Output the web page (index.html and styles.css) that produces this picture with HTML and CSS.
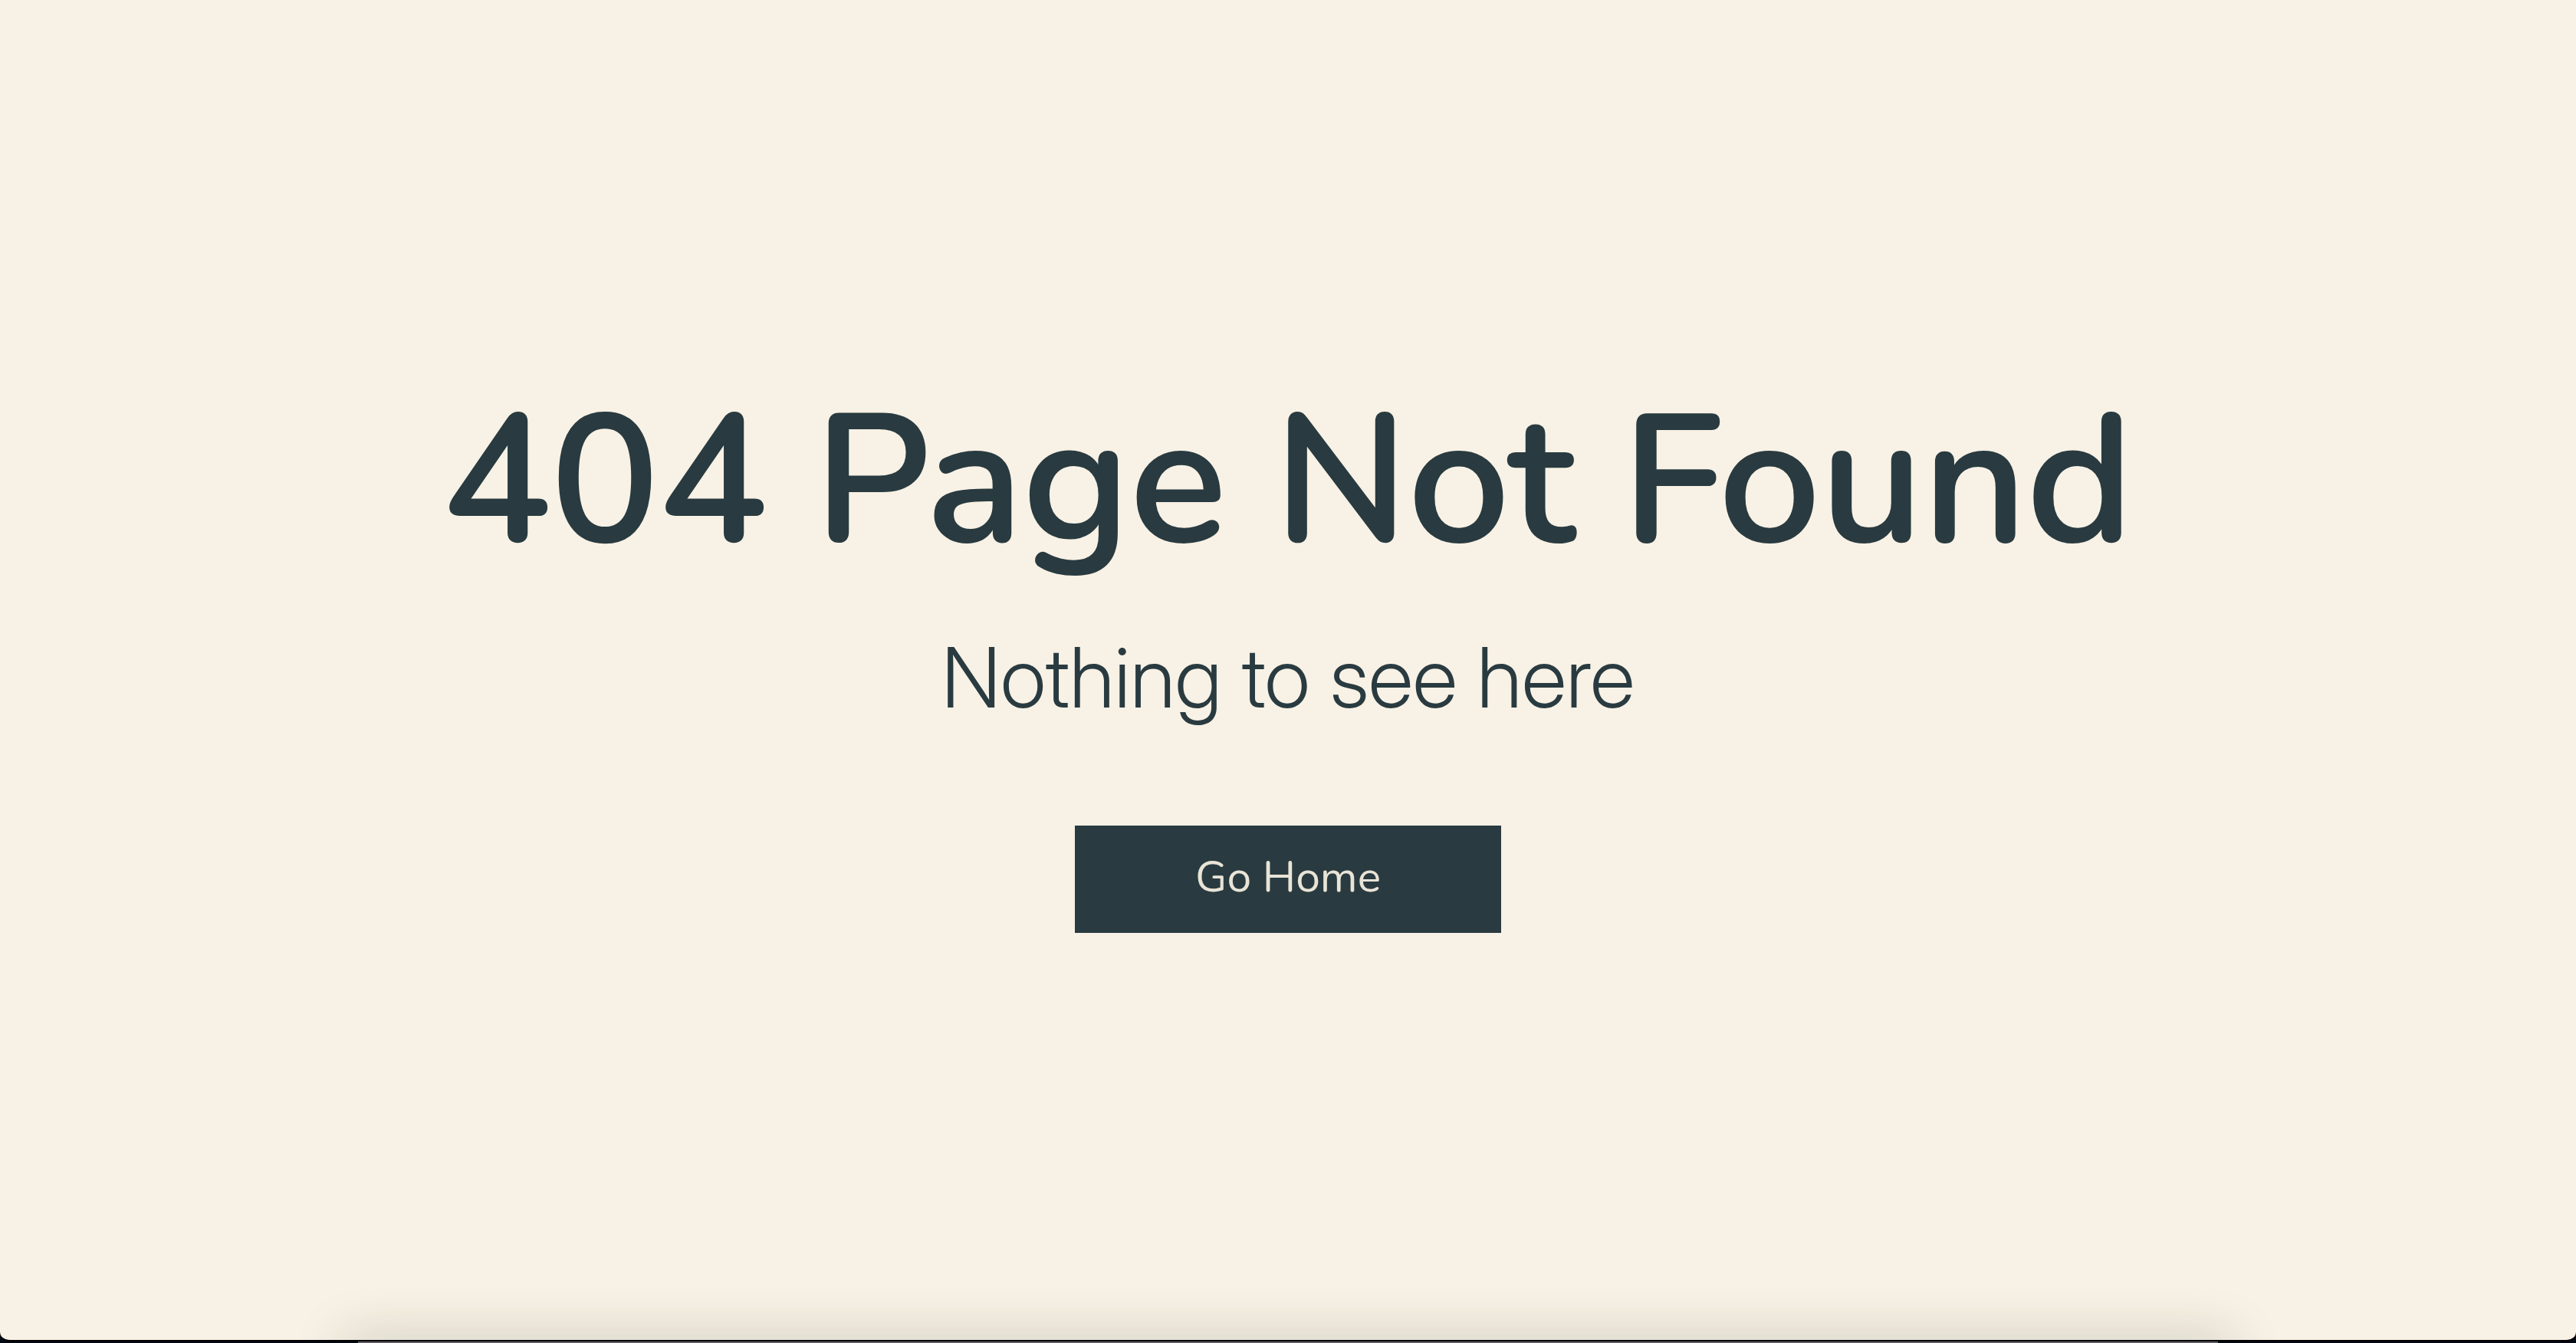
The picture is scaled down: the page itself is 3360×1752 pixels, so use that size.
FILE: index.html
```html
<!DOCTYPE html>
<html lang="en">
<head>
<meta charset="utf-8">
<meta name="viewport" content="width=device-width, initial-scale=1">
<title>404 Page Not Found</title>
<link rel="stylesheet" href="styles.css">
</head>
<body class="desktop">
<main class="page">
<h1 class="title">404 Page Not Found</h1>
<p class="subtitle">Nothing to see here</p>
<button class="home-button" type="button">Go Home</button>
</main>
<div class="dock" aria-hidden="true"></div>
</body>
</html>
```
FILE: styles.css
```css
* {
  box-sizing: border-box;
}

.desktop {
  position: relative;
  display: flex;
  flex-direction: column;
  min-height: 100vh;
  margin: 0;
  padding-bottom: 2px;
  background: #030812;
  color: #293b40;
}

.page {
  flex: 1;
  display: flex;
  flex-direction: column;
  align-items: center;
  justify-content: center;
  padding-bottom: 42px;
  border-bottom: 2px solid #000;
  border-radius: 0 0 12px 12px;
  background: #f8f1e5;
}

.title {
  margin: 0 0 44px;
  font: 600 235px/280px "Nunito", "Open Sans", sans-serif;
  -webkit-text-stroke: 2px currentColor;
  text-align: center;
}

.subtitle {
  margin: 0 0 124px;
  font: 300 109px/140px "Inter Display", "Inter", sans-serif;
  text-align: center;
}

.home-button {
  min-width: 556px;
  height: 140px;
  padding: 0 0 6px;
  border: 0;
  background: #293b40;
  color: #e9e4d7;
  font: 400 57px/72px "Nunito", "Noto Sans", sans-serif;
  cursor: pointer;
}

/* Top edge of the dock, with its shadow falling on the window */
.dock {
  position: absolute;
  right: 467px;
  bottom: 0;
  left: 467px;
  height: 2px;
  background: #5f5b62;
  box-shadow: 0 18px 70px 18px rgba(20, 40, 30, 0.24);
}
```
